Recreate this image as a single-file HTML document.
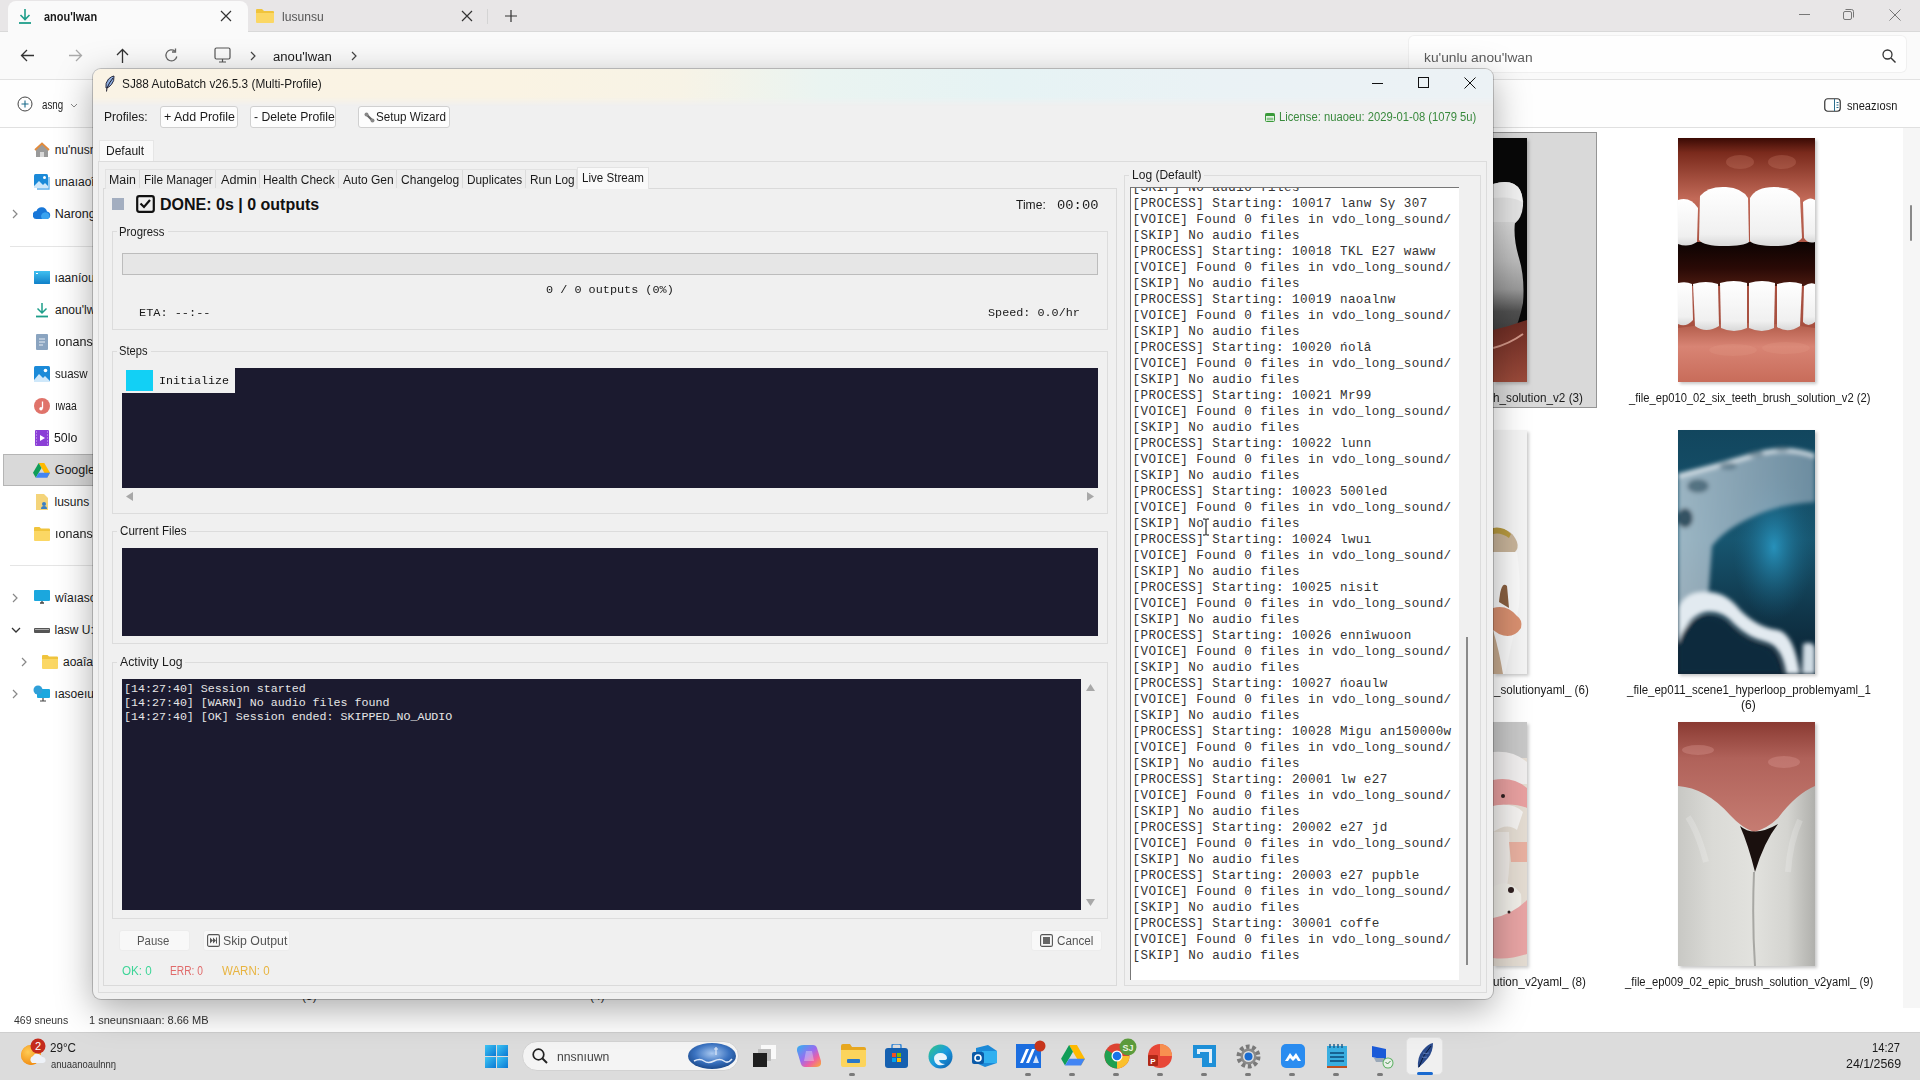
<!DOCTYPE html>
<html><head><meta charset="utf-8">
<style>
*{margin:0;padding:0;box-sizing:border-box}
html,body{width:1920px;height:1080px;overflow:hidden;background:#fff;font-family:"Liberation Sans",sans-serif;color:#1a1a1a}
.a{position:absolute}
.t{position:absolute;white-space:nowrap;line-height:1}
.m{font-family:"Liberation Mono",monospace}
.c{font-family:"Liberation Mono",monospace}
/* explorer */
#tabbar{left:0;top:0;width:1920px;height:32px;background:#e8e6e7;border-bottom:1px solid #d9d9d9}
#tab1{left:8px;top:1px;width:240px;height:32px;background:#fafafa;border-radius:8px 8px 0 0}
#navrow{left:0;top:32px;width:1920px;height:48px;background:#fafafa;border-bottom:1px solid #e2e2e2}
#toolrow{left:0;top:80px;width:1920px;height:48px;background:#fefefe;border-bottom:1px solid #e0e0e0}
#search{left:1409px;top:36px;width:497px;height:36px;background:#fefefe;border-radius:5px;box-shadow:0 0 0 1px #f0f0f0}
#nav{left:0;top:128px;width:93px;height:880px;background:#fff}
#content{left:93px;top:128px;width:1827px;height:880px;background:#fff}
#status{left:0;top:1008px;width:1920px;height:24px;background:#fff}
#taskbar{left:0;top:1032px;width:1920px;height:48px;background:#dcdcdc;border-top:1px solid #cfcfcf}
/* app */
#app{left:93px;top:69px;width:1400px;height:930px;background:#f0f0f0;border-radius:8px;box-shadow:0 0 0 1px rgba(0,0,0,.2),0 10px 36px rgba(0,0,0,.34)}
#title{left:93px;top:69px;width:1400px;height:37px;border-radius:8px 8px 0 0;background:linear-gradient(90deg,#faf3e5 0%,#faf3e3 30%,#f7f3e6 42%,#eaf4f1 52%,#e6f3f4 65%,#eaf2f5 80%,#ecf2f5 100%);-webkit-mask-image:linear-gradient(to bottom,#000 0%,#000 75%,transparent 100%);mask-image:linear-gradient(to bottom,#000 0%,#000 75%,transparent 100%)}
.dark{background:#1b1a2f}
.btn{position:absolute;background:#fdfdfd;border:1px solid #d0d0d0;border-radius:3px;font-size:12px;line-height:19px;text-align:center;color:#1a1a1a;white-space:nowrap}
.lf{position:absolute;border:1px solid #dcdcdc}
.lbl{position:absolute;font-size:12px;line-height:14px;background:#f0f0f0;padding:0 2px;white-space:nowrap;color:#1a1a1a}
.log{font-family:"Liberation Mono",monospace;font-size:12.6px;letter-spacing:0.42px;line-height:16px;color:#333;white-space:pre}
</style></head><body>

<!-- EXPLORER -->
<div id="tabbar" class="a"></div>
<div id="tab1" class="a"></div>
<!-- tab1 content -->
<svg class="a" style="left:17px;top:8px" width="16" height="17" viewBox="0 0 16 17"><path d="M8 1v10M3.5 7l4.5 4.5L12.5 7" fill="none" stroke="#1e9e8a" stroke-width="1.6"/><path d="M2 15h12" stroke="#1e9e8a" stroke-width="1.8"/></svg>
<div class="t" id="x0" style="left:43.52px;top:11.00px;font-size:12px;font-weight:bold;color:#1a1a1a;transform:scaleX(0.9123);transform-origin:0 0">anou'lwan</div>
<svg class="a" style="left:220px;top:10px" width="12" height="12" viewBox="0 0 12 12"><path d="M1 1l10 10M11 1L1 11" stroke="#333" stroke-width="1.2"/></svg>
<!-- tab2 -->
<svg class="a" style="left:256px;top:8px" width="18" height="15" viewBox="0 0 18 15"><path d="M0 2a1 1 0 0 1 1-1h5l2 2h9a1 1 0 0 1 1 1v10H0z" fill="#f0c43c"/><path d="M0 5h18v9a1 1 0 0 1-1 1H1a1 1 0 0 1-1-1z" fill="#fbd764"/></svg>
<div class="t" id="x1" style="left:282.47px;top:10.50px;font-size:12px;color:#555;transform:scaleX(1.0075);transform-origin:0 0">lusunsu</div>
<svg class="a" style="left:461px;top:10px" width="12" height="12" viewBox="0 0 12 12"><path d="M1 1l10 10M11 1L1 11" stroke="#333" stroke-width="1.2"/></svg>
<div class="a" style="left:487px;top:9px;width:1px;height:15px;background:#d4d4d4"></div>
<svg class="a" style="left:505px;top:10px" width="12" height="12" viewBox="0 0 12 12"><path d="M6 0v12M0 6h12" stroke="#333" stroke-width="1.2"/></svg>
<!-- window controls -->
<div class="a" style="left:1799px;top:14px;width:11px;height:1px;background:#777"></div>
<svg class="a" style="left:1843px;top:9px" width="11" height="11" viewBox="0 0 11 11"><rect x="0.5" y="2.5" width="8" height="8" rx="1.5" fill="none" stroke="#777"/><path d="M2.5 .5h6a2 2 0 0 1 2 2v6" fill="none" stroke="#777"/></svg>
<svg class="a" style="left:1889px;top:9px" width="12" height="12" viewBox="0 0 12 12"><path d="M.5 .5l11 11M11.5 .5l-11 11" stroke="#777" stroke-width="1"/></svg>

<div id="navrow" class="a"></div>
<svg class="a" style="left:20px;top:49px" width="15" height="13" viewBox="0 0 15 13"><path d="M14 6.5H1.5M7 1L1.5 6.5 7 12" fill="none" stroke="#333" stroke-width="1.3"/></svg>
<svg class="a" style="left:68px;top:49px" width="15" height="13" viewBox="0 0 15 13"><path d="M1 6.5h12.5M8 1l5.5 5.5L8 12" fill="none" stroke="#aaa" stroke-width="1.3"/></svg>
<svg class="a" style="left:116px;top:48px" width="13" height="15" viewBox="0 0 13 15"><path d="M6.5 15V1.5M1 7l5.5-5.5L12 7" fill="none" stroke="#333" stroke-width="1.3"/></svg>
<svg class="a" style="left:164px;top:48px" width="15" height="15" viewBox="0 0 15 15"><path d="M12.8 8.5A5.5 5.5 0 1 1 11 3.2" fill="none" stroke="#666" stroke-width="1.3"/><path d="M11.5 .5v3.5H8" fill="none" stroke="#666" stroke-width="1.3"/></svg>
<svg class="a" style="left:214px;top:47px" width="17" height="16" viewBox="0 0 17 16"><rect x="1" y="1" width="15" height="11" rx="1.5" fill="none" stroke="#555" stroke-width="1.2"/><path d="M5 15h7M8.5 12v3" stroke="#555" stroke-width="1.2"/></svg>
<svg class="a" style="left:250px;top:51px" width="7" height="10" viewBox="0 0 7 10"><path d="M1 1l4 4-4 4" fill="none" stroke="#444" stroke-width="1.2"/></svg>
<div class="t" id="x2" style="left:273.37px;top:51.00px;font-size:12.5px;color:#1a1a1a;transform:scaleX(1.0509);transform-origin:0 0">anou'lwan</div>
<svg class="a" style="left:351px;top:51px" width="7" height="10" viewBox="0 0 7 10"><path d="M1 1l4 4-4 4" fill="none" stroke="#444" stroke-width="1.2"/></svg>
<div id="search" class="a"></div>
<div class="t" id="x3" style="left:1423.67px;top:51.50px;font-size:12.5px;color:#5c5c5c;transform:scaleX(1.1021);transform-origin:0 0">ku'unlu anou'lwan</div>
<svg class="a" style="left:1882px;top:49px" width="14" height="14" viewBox="0 0 14 14"><circle cx="5.5" cy="5.5" r="4.5" fill="none" stroke="#333" stroke-width="1.3"/><path d="M9 9l4.5 4.5" stroke="#333" stroke-width="1.4"/></svg>

<div id="toolrow" class="a"></div>
<svg class="a" style="left:17px;top:96px" width="16" height="16" viewBox="0 0 16 16"><circle cx="8" cy="8" r="7" fill="none" stroke="#444" stroke-width="1"/><path d="M8 4.5v7M4.5 8h7" stroke="#1a6a8a" stroke-width="1.1"/></svg>
<div class="t" id="x4" style="left:41.97px;top:99.00px;font-size:12px;color:#1a1a1a;transform:scaleX(0.8115);transform-origin:0 0">asng</div>
<svg class="a" style="left:70px;top:103px" width="8" height="5" viewBox="0 0 8 5"><path d="M1 1l3 3 3-3" fill="none" stroke="#888" stroke-width="1"/></svg>
<svg class="a" style="left:1824px;top:98px" width="17" height="14" viewBox="0 0 17 14"><rect x=".75" y=".75" width="15.5" height="12.5" rx="3" fill="none" stroke="#333" stroke-width="1.2"/><path d="M10.5 1v12M12.5 4.5h2M12.5 7h2M12.5 9.5h2" stroke="#2a6c8c" stroke-width="1"/></svg>
<div class="t" id="x5" style="left:1847.49px;top:99.50px;font-size:12px;color:#1a1a1a;transform:scaleX(0.9204);transform-origin:0 0">sneazıosn</div>

<div id="nav" class="a"></div>

<!-- nav items -->
<svg class="a" style="left:34px;top:142px" width="16" height="16" viewBox="0 0 16 16"><path d="M2 7.5L8 2l6 5.5V15H2z" fill="#9a9a9a"/><path d="M1 8l7-6.5L15 8" fill="none" stroke="#e08a3c" stroke-width="1.8"/><rect x="6" y="10" width="4" height="5" fill="#d8d8d8"/></svg>
<div class="t" id="x6" style="left:54.74px;top:144.00px;font-size:12px;color:#1a1a1a;transform:scaleX(1.0000);transform-origin:0 0">nu'nusn</div>
<svg class="a" style="left:34px;top:174px" width="16" height="16" viewBox="0 0 16 16"><rect x="0" y="0" width="14" height="14" rx="1.5" fill="#1b8ad8"/><path d="M0 12l5-5 4 4 2-2 3 3v2H0z" fill="#cfe8fa"/><circle cx="10.5" cy="3.5" r="1.5" fill="#fff"/><path d="M15 3v12H3" fill="none" stroke="#5fb0ea" stroke-width="1.3"/></svg>
<div class="t" id="x7" style="left:54.66px;top:176.00px;font-size:12px;color:#1a1a1a;transform:scaleX(1.0000);transform-origin:0 0">unaıaoî</div>
<svg class="a" style="left:12px;top:209px" width="7" height="10" viewBox="0 0 7 10"><path d="M1 1l4 4-4 4" fill="none" stroke="#888" stroke-width="1.2"/></svg>
<svg class="a" style="left:33px;top:207px" width="18" height="12" viewBox="0 0 18 12"><path d="M4 12a4 4 0 0 1-.5-8A5.5 5.5 0 0 1 14 4.5 3.8 3.8 0 0 1 14 12z" fill="#1877d8"/><path d="M9 12a4 4 0 0 1 2-6.5 4 4 0 0 1 5.5 3A3 3 0 0 1 14 12z" fill="#3aa3f0"/></svg>
<div class="t" id="x8" style="left:54.68px;top:208.00px;font-size:12.5px;color:#1a1a1a;transform:scaleX(1.0000);transform-origin:0 0">Narong</div>
<div class="a" style="left:10px;top:246px;width:83px;height:1px;background:#e5e5e5"></div>
<svg class="a" style="left:34px;top:271px" width="16" height="14" viewBox="0 0 16 14"><rect x="0" y="0" width="16" height="13" rx="1" fill="#1da1e0"/><rect x="0" y="0" width="16" height="13" rx="1" fill="url(#gdesk)"/><defs><linearGradient id="gdesk" x1="0" y1="0" x2="0" y2="1"><stop offset="0" stop-color="#40c0f0"/><stop offset="1" stop-color="#1080c8"/></linearGradient></defs><rect x="2" y="2" width="2" height="1" fill="#fff"/></svg>
<div class="t" id="x9" style="left:54.60px;top:272.00px;font-size:12px;color:#1a1a1a;transform:scaleX(1.0000);transform-origin:0 0">ıaaníou</div>
<svg class="a" style="left:35px;top:302px" width="14" height="16" viewBox="0 0 14 16"><path d="M7 1v10M2.5 6.5L7 11l4.5-4.5" fill="none" stroke="#1e9e8a" stroke-width="1.5"/><path d="M1 14.5h12" stroke="#1e9e8a" stroke-width="1.8"/></svg>
<div class="t" id="x10" style="left:55.01px;top:304.00px;font-size:12px;color:#1a1a1a;transform:scaleX(1.0000);transform-origin:0 0">anou'lwa</div>
<svg class="a" style="left:36px;top:334px" width="12" height="16" viewBox="0 0 12 16"><rect x="0" y="0" width="12" height="16" rx="1" fill="#8aa4c0"/><path d="M3 5h6M3 8h6M3 11h4" stroke="#e8eef5" stroke-width="1"/></svg>
<div class="t" id="x11" style="left:54.84px;top:336.00px;font-size:12px;color:#1a1a1a;transform:scaleX(1.0457);transform-origin:0 0">ıonans</div>
<svg class="a" style="left:34px;top:366px" width="16" height="16" viewBox="0 0 16 16"><rect x="0" y="0" width="16" height="16" rx="1.5" fill="#1b8ad8"/><path d="M0 14l5-6 4 4 2-2 5 5v1H0z" fill="#cfe8fa"/><circle cx="11.5" cy="4.5" r="1.8" fill="#fff"/></svg>
<div class="t" id="x12" style="left:55.03px;top:368.00px;font-size:12px;color:#1a1a1a;transform:scaleX(0.9588);transform-origin:0 0">suasw</div>
<svg class="a" style="left:34px;top:398px" width="16" height="16" viewBox="0 0 16 16"><circle cx="8" cy="8" r="8" fill="#e0736a"/><path d="M8.5 3.5v7" stroke="#fff" stroke-width="1.3"/><circle cx="7" cy="10.8" r="1.7" fill="#fff"/></svg>
<div class="t" id="x13" style="left:54.50px;top:400.00px;font-size:12px;color:#1a1a1a;transform:scaleX(0.8583);transform-origin:0 0">ıwaa</div>
<svg class="a" style="left:35px;top:430px" width="14" height="16" viewBox="0 0 14 16"><rect x="0" y="0" width="14" height="16" rx="1" fill="#8b3fd6"/><path d="M5 5l5 3-5 3z" fill="#fff"/><path d="M1 2h1M1 5h1M1 8h1M1 11h1M1 14h1M12 2h1M12 5h1M12 8h1M12 11h1M12 14h1" stroke="#d8c0f4" stroke-width="1"/></svg>
<div class="t" id="x14" style="left:53.93px;top:432.00px;font-size:12px;color:#1a1a1a;transform:scaleX(1.0286);transform-origin:0 0">50lo</div>
<div class="a" style="left:3px;top:454px;width:92px;height:32px;background:#d9d9d9;border:1px solid #b5b5b5;border-right:none"></div>
<svg class="a" style="left:33px;top:463px" width="17" height="15" viewBox="0 0 17 15"><path d="M5.7 0h5.6l5.7 9.8-2.8 4.9z" fill="#ffba00"/><path d="M5.7 0L0 9.8l2.8 4.9L8.5 4.9z" fill="#0f9d58"/><path d="M2.8 14.7h11.4L17 9.8H5.7z" fill="#4285f4"/><path d="M11.3 0H5.7l2.8 4.9z" fill="#e94235" opacity=".0"/></svg>
<div class="t" id="x15" style="left:54.68px;top:464.00px;font-size:12.5px;color:#1a1a1a;transform:scaleX(1.0000);transform-origin:0 0">Google</div>
<svg class="a" style="left:36px;top:494px" width="14" height="16" viewBox="0 0 14 16"><path d="M0 0h8l4 4v12H0z" fill="#f4d47a"/><circle cx="8" cy="10" r="2" fill="#3b7fc4"/><path d="M5 15a3 3 0 0 1 6 0z" fill="#3b7fc4"/></svg>
<div class="t" id="x16" style="left:54.47px;top:496.00px;font-size:12px;color:#1a1a1a;transform:scaleX(1.0000);transform-origin:0 0">lusuns</div>
<svg class="a" style="left:34px;top:527px" width="16" height="14" viewBox="0 0 16 14"><path d="M0 1a1 1 0 0 1 1-1h4.5l1.5 1.5h8a1 1 0 0 1 1 1V13H0z" fill="#f0c43c"/><path d="M0 4h16v9a1 1 0 0 1-1 1H1a1 1 0 0 1-1-1z" fill="#fbd764"/></svg>
<div class="t" id="x17" style="left:54.84px;top:528.00px;font-size:12px;color:#1a1a1a;transform:scaleX(1.0457);transform-origin:0 0">ıonans</div>
<div class="a" style="left:10px;top:565px;width:83px;height:1px;background:#e5e5e5"></div>
<svg class="a" style="left:12px;top:593px" width="7" height="10" viewBox="0 0 7 10"><path d="M1 1l4 4-4 4" fill="none" stroke="#888" stroke-width="1.2"/></svg>
<svg class="a" style="left:34px;top:590px" width="16" height="16" viewBox="0 0 16 16"><rect x="0" y="0" width="16" height="11" rx="1" fill="#1ba7de"/><path d="M6 13h4M8 11v2" stroke="#444" stroke-width="1.3"/></svg>
<div class="t" id="x18" style="left:54.98px;top:592.00px;font-size:12px;color:#1a1a1a;transform:scaleX(1.0000);transform-origin:0 0">wîaıaso</div>
<svg class="a" style="left:11px;top:627px" width="10" height="7" viewBox="0 0 10 7"><path d="M1 1l4 4 4-4" fill="none" stroke="#333" stroke-width="1.3"/></svg>
<svg class="a" style="left:34px;top:626px" width="16" height="8" viewBox="0 0 16 8"><rect x="0" y="2" width="16" height="5" rx="1" fill="#555"/><rect x="1" y="3" width="14" height="1" fill="#aaa"/></svg>
<div class="t" id="x19" style="left:54.51px;top:624.00px;font-size:12px;color:#1a1a1a;transform:scaleX(1.0000);transform-origin:0 0">lasw U:</div>
<svg class="a" style="left:21px;top:657px" width="7" height="10" viewBox="0 0 7 10"><path d="M1 1l4 4-4 4" fill="none" stroke="#888" stroke-width="1.2"/></svg>
<svg class="a" style="left:42px;top:655px" width="16" height="14" viewBox="0 0 16 14"><path d="M0 1a1 1 0 0 1 1-1h4.5l1.5 1.5h8a1 1 0 0 1 1 1V13H0z" fill="#f0c43c"/><path d="M0 4h16v9a1 1 0 0 1-1 1H1a1 1 0 0 1-1-1z" fill="#fbd764"/></svg>
<div class="t" id="x20" style="left:62.96px;top:656.00px;font-size:12px;color:#1a1a1a;transform:scaleX(1.0000);transform-origin:0 0">aoaîa</div>
<svg class="a" style="left:12px;top:689px" width="7" height="10" viewBox="0 0 7 10"><path d="M1 1l4 4-4 4" fill="none" stroke="#888" stroke-width="1.2"/></svg>
<svg class="a" style="left:33px;top:685px" width="18" height="18" viewBox="0 0 18 18"><rect x="4" y="4" width="13" height="9" rx="1" fill="#1ba7de"/><circle cx="5" cy="5" r="4.5" fill="#2f9fd8"/><path d="M10 13v3M7 16h6" stroke="#444" stroke-width="1.2"/></svg>
<div class="t" id="x21" style="left:54.58px;top:688.00px;font-size:12px;color:#1a1a1a;transform:scaleX(1.0000);transform-origin:0 0">ıasoeıu</div>

<div id="content" class="a"></div>
<div class="a" style="left:1903px;top:128px;width:17px;height:880px;background:#f6f6f6"></div>
<div class="a" style="left:1910px;top:205px;width:2px;height:36px;background:#8a8a8a;border-radius:1px"></div>
<!-- selected item bg -->
<div class="a" style="left:1380px;top:132px;width:217px;height:276px;background:#d9d9d9;border:1px solid #959595"></div>
<!-- row1 left thumb -->
<svg class="a" style="left:1493px;top:138px;box-shadow:2px 2px 3px rgba(0,0,0,.2)" width="34" height="244" viewBox="0 0 34 244">
<defs><linearGradient id="g1n" x1="0" y1="0" x2="0" y2="1"><stop offset="0" stop-color="#d8d8d8"/><stop offset=".35" stop-color="#bcbcbc"/><stop offset=".6" stop-color="#9a9a9a"/><stop offset=".8" stop-color="#505050"/><stop offset="1" stop-color="#404040"/></linearGradient>
<linearGradient id="g1r" x1="0" y1="0" x2="0" y2="1"><stop offset="0" stop-color="#6a2a22"/><stop offset="1" stop-color="#9a4a3a"/></linearGradient></defs>
<rect width="34" height="244" fill="#080808"/>
<path d="M0 84L0 46Q20 40 27 52Q32 62 29 74Q26 84 20 86z" fill="#e4e4e4"/>
<path d="M0 46Q20 40 27 52Q30 58 29 64Q20 58 0 60z" fill="#f2f2f2"/>
<path d="M0 84L22 84Q20 100 26 120Q32 140 30 165Q26 185 20 195L0 196z" fill="url(#g1n)"/>
<path d="M0 192Q18 188 34 182V244H0z" fill="url(#g1r)"/>
<path d="M0 210Q16 206 30 196" stroke="#e8b0a0" stroke-width="2" fill="none" opacity=".8"/>
</svg>
<div class="t" id="x22" style="left:1492.82px;top:391.50px;font-size:12px;color:#1a1a1a;transform:scaleX(0.9772);transform-origin:0 0">h_solution_v2 (3)</div>
<!-- row1 right thumb: teeth -->
<svg class="a" style="left:1678px;top:138px;box-shadow:2px 2px 3px rgba(0,0,0,.22)" width="137" height="244" viewBox="0 0 137 244">
<defs>
<linearGradient id="t1g" x1="0" y1="0" x2="0" y2="1"><stop offset="0" stop-color="#3a0a04"/><stop offset=".06" stop-color="#7a2a1c"/><stop offset=".25" stop-color="#c26a58"/><stop offset=".45" stop-color="#a85040"/></linearGradient>
<linearGradient id="t1l" x1="0" y1="0" x2="0" y2="1"><stop offset="0" stop-color="#b05a48"/><stop offset=".4" stop-color="#d88474"/><stop offset="1" stop-color="#c86c5a"/></linearGradient>
<linearGradient id="t1t" x1="0" y1="0" x2="0" y2="1"><stop offset="0" stop-color="#ffffff"/><stop offset=".8" stop-color="#f0f0f0"/><stop offset="1" stop-color="#d8d8d8"/></linearGradient>
<linearGradient id="t1m" x1="0" y1="0" x2="0" y2="1"><stop offset="0" stop-color="#0c0302"/><stop offset=".6" stop-color="#2a0a06"/><stop offset="1" stop-color="#4a1a10"/></linearGradient>
</defs>
<rect width="137" height="244" fill="url(#t1g)"/>
<rect y="104" width="137" height="44" fill="url(#t1m)"/>
<path d="M0 62Q12 58 20 70L19 104Q10 110 0 106z" fill="url(#t1t)"/>
<path d="M22 58Q30 48 48 49Q64 50 70 60L71 104Q66 108 46 108Q26 108 21 102z" fill="url(#t1t)"/>
<path d="M72 60Q78 49 96 49Q114 49 122 60L124 100Q118 108 98 108Q76 108 72 103z" fill="url(#t1t)"/>
<path d="M125 64Q132 58 137 62V104Q130 106 126 100z" fill="url(#t1t)"/>
<path d="M0 190Q70 180 137 190V244H0z" fill="url(#t1l)"/>
<path d="M0 145Q8 143 14 146L15 182Q8 190 0 186z" fill="url(#t1t)"/>
<path d="M15 146Q28 142 40 146L41 188Q28 196 17 188z" fill="url(#t1t)"/>
<path d="M42 145Q56 141 69 145L69 190Q56 196 43 190z" fill="url(#t1t)"/>
<path d="M71 145Q84 141 97 145L96 190Q84 196 71 190z" fill="url(#t1t)"/>
<path d="M99 146Q112 142 124 146L122 188Q110 196 99 189z" fill="url(#t1t)"/>
<path d="M126 148Q132 144 137 146V184Q130 190 125 184z" fill="url(#t1t)"/>
<ellipse cx="62" cy="24" rx="14" ry="7" fill="#d88a78" opacity=".25"/><ellipse cx="104" cy="24" rx="14" ry="7" fill="#d88a78" opacity=".25"/>
<ellipse cx="55" cy="212" rx="24" ry="6" fill="#e49a88" opacity=".25"/><ellipse cx="108" cy="210" rx="24" ry="6" fill="#e49a88" opacity=".25"/>
</svg>
<div class="t" id="x23" style="left:1629.00px;top:391.50px;font-size:12px;color:#1a1a1a;transform:scaleX(0.9326);transform-origin:0 0">_file_ep010_02_six_teeth_brush_solution_v2 (2)</div>
<!-- row2 left -->
<svg class="a" style="left:1493px;top:430px;box-shadow:2px 2px 3px rgba(0,0,0,.2)" width="34" height="244" viewBox="0 0 34 244">
<rect width="34" height="244" fill="#f4f4f4"/>
<path d="M0 100Q18 96 24 112Q26 118 22 122H0z" fill="#c8b49a"/>
<path d="M0 98Q10 96 18 104L16 108Q8 102 0 104z" fill="#b89a40"/>
<path d="M0 122H24Q28 150 26 175Q22 200 12 244H0z" fill="#fafafa"/>
<path d="M6 172Q8 150 14 156L16 178z" fill="#8a6040"/>
<path d="M0 178Q14 174 24 186Q30 190 28 198Q20 210 6 204L0 200z" fill="#d99070"/>
<path d="M0 200Q6 220 10 244H0z" fill="#c8ac90"/>
</svg>
<div class="t" id="x24" style="left:1493.77px;top:684.25px;font-size:12px;color:#1a1a1a;transform:scaleX(0.9665);transform-origin:0 0">_solutionyaml_ (6)</div>
<!-- row2 right: blue -->
<svg class="a" style="left:1678px;top:430px;box-shadow:2px 2px 3px rgba(0,0,0,.22)" width="137" height="244" viewBox="0 0 137 244">
<defs>
<linearGradient id="b2g" x1="0" y1="0" x2="0" y2="1"><stop offset="0" stop-color="#12465e"/><stop offset=".45" stop-color="#175670"/><stop offset=".75" stop-color="#10364a"/><stop offset="1" stop-color="#0a2030"/></linearGradient>
<radialGradient id="b2c" cx=".7" cy=".48" r=".3"><stop offset="0" stop-color="#2a9cc8" stop-opacity=".85"/><stop offset="1" stop-color="#1a6080" stop-opacity="0"/></radialGradient>
<linearGradient id="b2w" x1="0" y1="0" x2="1" y2="0"><stop offset="0" stop-color="#c8d6e0"/><stop offset="1" stop-color="#8aa2b4"/></linearGradient>
<filter id="bl2"><feGaussianBlur stdDeviation="2"/></filter>
</defs>
<rect width="137" height="244" fill="url(#b2g)"/>
<rect width="137" height="244" fill="url(#b2c)"/>
<g filter="url(#bl2)">
<path d="M0 44Q40 34 80 22Q110 14 137 24V72Q100 74 72 88Q46 100 34 116L30 170Q15 176 0 178z" fill="url(#b2w)" opacity=".75"/>
<path d="M0 46Q40 36 80 24Q110 16 137 26" stroke="#e8eef2" stroke-width="5" fill="none" opacity=".7"/>
<ellipse cx="20" cy="56" rx="11" ry="7" fill="#2a4a5c" opacity=".6"/><ellipse cx="50" cy="36" rx="9" ry="4" fill="#3a5a6c" opacity=".5"/><ellipse cx="78" cy="24" rx="8" ry="3.5" fill="#3a5a6c" opacity=".5"/><ellipse cx="104" cy="19" rx="7" ry="3" fill="#3a5a6c" opacity=".5"/>
<ellipse cx="7" cy="88" rx="8" ry="10" fill="#1a3a4c" opacity=".8"/>
<path d="M0 178Q8 160 30 162Q48 162 62 180Q80 198 100 200Q116 204 122 244H108Q104 216 88 212Q70 208 56 194Q44 180 28 182Q10 186 4 208L0 214z" fill="#e2eaf0"/>
<path d="M0 214Q8 188 28 186Q44 186 56 200Q68 212 86 216Q100 222 104 244H0z" fill="#0c2a3c"/>
<path d="M125 214Q137 210 137 220V244H124z" fill="#d0dce4"/>
</g>
</svg>
<div class="t" id="x25" style="left:1627.00px;top:684.25px;font-size:12px;color:#1a1a1a;transform:scaleX(0.9575);transform-origin:0 0">_file_ep011_scene1_hyperloop_problemyaml_1</div>
<div class="t" id="x26" style="left:1741.47px;top:699.00px;font-size:12px;color:#1a1a1a;transform:scaleX(1.0077);transform-origin:0 0">(6)</div>
<!-- row3 left -->
<svg class="a" style="left:1493px;top:722px;box-shadow:2px 2px 3px rgba(0,0,0,.2)" width="34" height="244" viewBox="0 0 34 244">
<rect width="34" height="244" fill="#e4dcd2"/>
<rect width="34" height="36" fill="#c8c8c8"/>
<path d="M0 30Q20 28 34 40V62H0z" fill="#f0eeee"/>
<path d="M0 58Q20 54 34 66V86Q20 80 0 84z" fill="#e8a0a0"/>
<path d="M0 84Q20 80 30 90L24 108Q14 100 0 110z" fill="#f4f2f0"/>
<path d="M0 110H16Q18 140 14 165H0z" fill="#eeeae6"/>
<path d="M16 120H34V140H18z" fill="#e8b0a0"/>
<path d="M0 165Q16 155 28 172Q30 190 20 200Q10 196 0 200z" fill="#f0eee8"/>
<path d="M0 196Q20 192 34 178V232Q16 238 0 236z" fill="#e8a4a4"/>
<circle cx="10" cy="74" r="2" fill="#302020"/><circle cx="18" cy="168" r="3" fill="#302020"/><circle cx="16" cy="190" r="1.5" fill="#302020"/>
</svg>
<div class="t" id="x27" style="left:1492.83px;top:976.25px;font-size:12px;color:#1a1a1a;transform:scaleX(0.9750);transform-origin:0 0">ution_v2yaml_ (8)</div>
<!-- row3 right: V gums -->
<svg class="a" style="left:1678px;top:722px;box-shadow:2px 2px 3px rgba(0,0,0,.22)" width="137" height="244" viewBox="0 0 137 244">
<defs>
<linearGradient id="v3g" x1="0" y1="0" x2="0" y2="1"><stop offset="0" stop-color="#8a3a32"/><stop offset=".15" stop-color="#b0625a"/><stop offset=".45" stop-color="#c67c72"/></linearGradient>
<linearGradient id="v3t" x1="0" y1="0" x2="1" y2="0"><stop offset="0" stop-color="#c8c8c4"/><stop offset=".25" stop-color="#dadad6"/><stop offset=".55" stop-color="#e2e2de"/><stop offset=".8" stop-color="#d4d4d0"/><stop offset="1" stop-color="#b0b0ac"/></linearGradient>
</defs>
<rect width="137" height="244" fill="url(#v3g)"/>
<path d="M0 64Q28 66 52 93Q64 106 76 110Q90 106 100 96Q118 72 137 64V244H0z" fill="url(#v3t)"/>
<path d="M62 104Q76 116 100 102Q86 120 77 150Q70 122 62 104z" fill="#1a100e"/>
<path d="M76 150Q74 200 77 244" stroke="#a8a8a4" stroke-width="2" fill="none"/>
<ellipse cx="20" cy="28" rx="16" ry="5" fill="#dc9c94" opacity=".35"/><ellipse cx="106" cy="40" rx="16" ry="6" fill="#dc9c94" opacity=".35"/>
<path d="M10 95Q20 110 28 140" stroke="#ffffff" stroke-width="6" opacity=".2" fill="none"/>
<path d="M122 98Q112 120 110 150" stroke="#ffffff" stroke-width="6" opacity=".2" fill="none"/>
</svg>
<div class="t" id="x28" style="left:1625.00px;top:976.25px;font-size:12px;color:#1a1a1a;transform:scaleX(0.9370);transform-origin:0 0">_file_ep009_02_epic_brush_solution_v2yaml_ (9)</div>
<!-- status right icons -->
<svg class="a" style="left:1873px;top:1013px" width="14" height="12" viewBox="0 0 14 12"><path d="M0 1h14M0 4.5h14M0 8h14M0 11.5h14" stroke="#555" stroke-width="1"/></svg>
<svg class="a" style="left:1896px;top:1012px" width="14" height="13" viewBox="0 0 14 13"><rect x=".5" y=".5" width="13" height="12" fill="none" stroke="#555" stroke-width="1"/></svg>

<div id="status" class="a"></div>
<div class="t" id="x29" style="left:13.79px;top:1014.75px;font-size:11.5px;color:#333;transform:scaleX(0.9110);transform-origin:0 0">469 sneuns</div>

<div class="t" id="x30" style="left:88.62px;top:1014.75px;font-size:11.5px;color:#333;transform:scaleX(0.9593);transform-origin:0 0">1 sneunsnıaan: 8.66 MB</div>
<div id="taskbar" class="a"></div>
<!-- weather -->
<svg class="a" style="left:18px;top:1036px" width="30" height="32" viewBox="0 0 30 32"><circle cx="13" cy="19" r="10" fill="#f59a23"/><circle cx="13" cy="19" r="10" fill="url(#sun)"/><defs><radialGradient id="sun" cx=".35" cy=".35" r=".7"><stop offset="0" stop-color="#ffcc55"/><stop offset="1" stop-color="#f08a10"/></radialGradient></defs><path d="M14 27a4 4 0 0 1 1-7 5 5 0 0 1 9 1 3 3 0 0 1 1 6z" fill="#eef2f8"/><circle cx="20" cy="10" r="7.5" fill="#c42b1c"/><text x="20" y="14" font-family="Liberation Sans" font-size="11" fill="#fff" text-anchor="middle">2</text></svg>
<div class="t" id="x31" style="left:49.83px;top:1041.75px;font-size:12px;color:#1a1a1a;transform:scaleX(0.9700);transform-origin:0 0">29°C</div>
<div class="t" id="x32" style="left:50.82px;top:1058.50px;font-size:11.5px;color:#333;transform:scaleX(0.8196);transform-origin:0 0">anuaanoaulnnŋ</div>
<!-- start -->
<svg class="a" style="left:485px;top:1045px" width="23" height="23" viewBox="0 0 23 23"><defs><linearGradient id="win" x1="0" y1="0" x2="1" y2="1"><stop offset="0" stop-color="#3ec6f5"/><stop offset="1" stop-color="#0a78d4"/></linearGradient></defs><rect x="0" y="0" width="11" height="11" fill="url(#win)"/><rect x="12" y="0" width="11" height="11" fill="url(#win)"/><rect x="0" y="12" width="11" height="11" fill="url(#win)"/><rect x="12" y="12" width="11" height="11" fill="url(#win)"/></svg>
<!-- search pill -->
<div class="a" style="left:522px;top:1041px;width:217px;height:30px;background:#f4f4f4;border:1px solid #d2d2d2;border-radius:15px"></div>
<svg class="a" style="left:532px;top:1048px" width="16" height="16" viewBox="0 0 16 16"><circle cx="6.5" cy="6.5" r="5.3" fill="none" stroke="#222" stroke-width="1.7"/><path d="M10.5 10.5l4.5 4.5" stroke="#222" stroke-width="1.9"/></svg>
<div class="t" id="x33" style="left:556.94px;top:1050.50px;font-size:12px;color:#444;transform:scaleX(1.0200);transform-origin:0 0">nnsnıuwn</div>
<svg class="a" style="left:688px;top:1043px" width="48" height="26" viewBox="0 0 48 26"><defs><radialGradient id="pill" cx=".5" cy=".4" r=".6"><stop offset="0" stop-color="#a8c8f0"/><stop offset=".6" stop-color="#3a72c0"/><stop offset="1" stop-color="#1c4a8c"/></radialGradient></defs><ellipse cx="24" cy="13" rx="24" ry="13" fill="url(#pill)"/><path d="M6 18q6-3 10 0t10 0 10 0 8-2" stroke="#dfe9f8" stroke-width="1.5" fill="none"/><path d="M28 4v8M26 6h4" stroke="#dfe9f8" stroke-width="1.2"/></svg>
<!-- task view -->
<svg class="a" style="left:753px;top:1045px" width="23" height="22" viewBox="0 0 23 22"><rect x="8" y="0" width="15" height="14" fill="#fafafa"/><rect x="5" y="4" width="13" height="12" fill="#bdbdbd"/><rect x="0" y="8" width="14" height="14" fill="#1f1f1f"/></svg>
<!-- copilot -->
<svg class="a" style="left:797px;top:1045px" width="24" height="22" viewBox="0 0 24 22"><defs><linearGradient id="cop" x1="0" y1="0" x2="1" y2="1"><stop offset="0" stop-color="#2fb4f0"/><stop offset=".45" stop-color="#9a6cf0"/><stop offset=".7" stop-color="#f060a0"/><stop offset="1" stop-color="#f8b030"/></linearGradient></defs><path d="M7 0h9q3 0 4 3l4 13q1 6-5 6H8q-3 0-4-3L0 6Q-1 0 7 0z" fill="url(#cop)"/><path d="M9 6h6l2 10H7z" fill="#f4f4f4" opacity=".35"/></svg>
<!-- explorer -->
<svg class="a" style="left:841px;top:1044px" width="25" height="23" viewBox="0 0 25 23"><path d="M0 2a2 2 0 0 1 2-2h7l2 3h12a2 2 0 0 1 2 2v16H0z" fill="#e8a820"/><path d="M0 6h25v15a2 2 0 0 1-2 2H2a2 2 0 0 1-2-2z" fill="#fcd45c"/><rect x="6" y="15" width="13" height="4" rx="1" fill="#2a78c8"/></svg>
<!-- store -->
<svg class="a" style="left:885px;top:1044px" width="23" height="24" viewBox="0 0 23 24"><path d="M7 4V2a2 2 0 0 1 2-2h5a2 2 0 0 1 2 2v2" fill="none" stroke="#3a8ad8" stroke-width="1.5"/><rect x="0" y="4" width="23" height="20" rx="3" fill="#1560b0"/><rect x="7" y="9" width="4" height="4" fill="#f25022"/><rect x="12" y="9" width="4" height="4" fill="#7fba00"/><rect x="7" y="14" width="4" height="4" fill="#00a4ef"/><rect x="12" y="14" width="4" height="4" fill="#ffb900"/></svg>
<!-- edge -->
<svg class="a" style="left:928px;top:1044px" width="25" height="25" viewBox="0 0 25 25"><defs><linearGradient id="edg" x1="0" y1="0" x2="1" y2="1"><stop offset="0" stop-color="#36c880"/><stop offset=".5" stop-color="#1a9ce0"/><stop offset="1" stop-color="#0c5aa8"/></linearGradient></defs><circle cx="12.5" cy="12.5" r="12" fill="url(#edg)"/><path d="M6 14a6.5 5 0 0 1 13 0q0 2-3 2h-5q1 4 6 4-3 2-7 1-4-2-4-7z" fill="#e8f4fc"/></svg>
<!-- outlook -->
<svg class="a" style="left:972px;top:1045px" width="25" height="22" viewBox="0 0 25 22"><path d="M4 3l12-3 9 6v12L13 22 4 18z" fill="#1c8ad8"/><path d="M10 6l15 0v12H10z" fill="#30b0f0"/><rect x="0" y="7" width="12" height="12" rx="2" fill="#0a5aa8"/><circle cx="6" cy="13" r="3" fill="none" stroke="#fff" stroke-width="1.6"/></svg>
<!-- M app -->
<svg class="a" style="left:1016px;top:1040px" width="33" height="28" viewBox="0 0 33 28"><rect x="0" y="4" width="25" height="24" fill="#1c6ee0"/><path d="M4 23l6-14h3l-6 14zM10 23l6-14h3l-6 14z" fill="#fff"/><path d="M17 23l3-8 3 8z" fill="#fff" opacity=".8"/><circle cx="24" cy="6" r="5.5" fill="#c8361c"/></svg>
<!-- drive -->
<svg class="a" style="left:1061px;top:1045px" width="24" height="21" viewBox="0 0 17 15"><path d="M5.7 0h5.6l5.7 9.8-2.8 4.9z" fill="#ffba00"/><path d="M5.7 0L0 9.8l2.8 4.9L8.5 4.9z" fill="#0f9d58"/><path d="M2.8 14.7h11.4L17 9.8H5.7z" fill="#4285f4"/></svg>
<!-- chrome -->
<svg class="a" style="left:1104px;top:1038px" width="34" height="31" viewBox="0 0 34 31"><circle cx="13" cy="18" r="12.5" fill="#dd4433"/><path d="M13 18L2.2 11.8A12.5 12.5 0 0 0 13 30.5z" fill="#1fa050"/><path d="M13 18h12.5A12.5 12.5 0 0 1 13 30.5z" fill="#fbc02d"/><circle cx="13" cy="18" r="5.5" fill="#fff"/><circle cx="13" cy="18" r="4.3" fill="#1a73e8"/><circle cx="24" cy="9" r="8.5" fill="#5c9c3c"/><text x="24" y="12.5" font-family="Liberation Sans" font-size="9" font-weight="bold" fill="#e8f4e0" text-anchor="middle">SJ</text></svg>
<!-- pdf -->
<svg class="a" style="left:1148px;top:1044px" width="24" height="24" viewBox="0 0 24 24"><circle cx="12" cy="12" r="12" fill="#e84838"/><path d="M12 0a12 12 0 0 1 12 12H12z" fill="#f89050"/><rect x="0" y="11" width="10" height="11" rx="1" fill="#b02818"/><text x="5" y="20" font-family="Liberation Sans" font-size="8" font-weight="bold" fill="#fff" text-anchor="middle">P</text></svg>
<!-- blue app -->
<svg class="a" style="left:1193px;top:1045px" width="23" height="22" viewBox="0 0 23 22"><path d="M0 0h23v22H9V13H0z" fill="#1e90d8"/><path d="M4 4h15v14h-6V9H4z" fill="#e0f0fa"/><path d="M7 7h9v11h-3V10H7z" fill="#1e90d8"/></svg>
<!-- settings -->
<svg class="a" style="left:1236px;top:1044px" width="25" height="25" viewBox="0 0 25 25"><circle cx="12.5" cy="12.5" r="9.5" fill="none" stroke="#7a7a7a" stroke-width="5" stroke-dasharray="3.5 2.5"/><circle cx="12.5" cy="12.5" r="8" fill="#8a8a8a"/><circle cx="12.5" cy="12.5" r="5.5" fill="#e0e0e0"/><circle cx="12.5" cy="12.5" r="4" fill="#1a6cd0"/></svg>
<!-- cloud app -->
<svg class="a" style="left:1281px;top:1044px" width="24" height="24" viewBox="0 0 24 24"><rect width="24" height="24" rx="5" fill="#2a8cf0"/><path d="M4 17l5-8 3 4 3-4 5 8h-3l-2-3-3 3-3-3-2 3z" fill="#fff"/></svg>
<!-- notepad -->
<svg class="a" style="left:1327px;top:1044px" width="20" height="25" viewBox="0 0 20 25"><rect x="0" y="2" width="20" height="21" fill="#3aaee0"/><rect x="0" y="22" width="20" height="2" fill="#c05020"/><path d="M3 0v4M7 0v4M11 0v4M15 0v4" stroke="#1a5a8a" stroke-width="1.4"/><path d="M3 9h14M3 13h14M3 17h14" stroke="#0c4a78" stroke-width="1.3"/></svg>
<!-- remote -->
<svg class="a" style="left:1370px;top:1044px" width="24" height="25" viewBox="0 0 24 25"><path d="M2 2l14 3v11L2 13z" fill="#1a5ad8"/><path d="M4 14h10l2 4H6z" fill="#9aa8b8"/><circle cx="18" cy="19" r="5.5" fill="#5ab060"/><circle cx="18" cy="19" r="4.5" fill="#e8f0e8"/><path d="M15.5 18l2 2 3-3" stroke="#3a8a40" stroke-width="1" fill="none"/></svg>
<!-- feather active -->
<div class="a" style="left:1406px;top:1037px;width:37px;height:38px;background:#f0f0f0;border-radius:5px;border:1px solid #e2e2e2"></div>
<svg class="a" style="left:1415px;top:1043px" width="20" height="26" viewBox="0 0 20 26"><path d="M3 25Q2 14 8 7Q13 1 18 0Q18 9 13 15Q9 20 3 25z" fill="#2a4a8c"/><path d="M4 24Q7 13 16 3" stroke="#0a1a3a" stroke-width="1" fill="none"/><path d="M8 10q3 1 6 0M7 14q3 1 5 0" stroke="#6a8ac8" stroke-width=".8" fill="none"/></svg>
<div class="a" style="left:1417px;top:1072px;width:16px;height:3px;border-radius:2px;background:#1a6ad0"></div>
<!-- indicators -->
<div class="a" style="left:849px;top:1073px;width:6px;height:3px;border-radius:2px;background:#7a7a7a"></div>
<div class="a" style="left:1025px;top:1073px;width:6px;height:3px;border-radius:2px;background:#7a7a7a"></div>
<div class="a" style="left:1069px;top:1073px;width:6px;height:3px;border-radius:2px;background:#7a7a7a"></div>
<div class="a" style="left:1113px;top:1073px;width:6px;height:3px;border-radius:2px;background:#7a7a7a"></div>
<div class="a" style="left:1157px;top:1073px;width:6px;height:3px;border-radius:2px;background:#7a7a7a"></div>
<div class="a" style="left:1201px;top:1073px;width:6px;height:3px;border-radius:2px;background:#7a7a7a"></div>
<div class="a" style="left:1245px;top:1073px;width:6px;height:3px;border-radius:2px;background:#7a7a7a"></div>
<div class="a" style="left:1289px;top:1073px;width:6px;height:3px;border-radius:2px;background:#7a7a7a"></div>
<div class="a" style="left:1333px;top:1073px;width:6px;height:3px;border-radius:2px;background:#7a7a7a"></div>
<div class="a" style="left:1377px;top:1073px;width:6px;height:3px;border-radius:2px;background:#7a7a7a"></div>
<!-- clock -->
<div class="t" id="x34" style="left:1872.23px;top:1041.50px;font-size:12px;color:#1a1a1a;transform:scaleX(0.9276);transform-origin:0 0">14:27</div>
<div class="t" id="x35" style="left:1845.90px;top:1058.00px;font-size:12px;color:#1a1a1a;transform:scaleX(1.0327);transform-origin:0 0">24/1/2569</div>


<div class="t" style="left:302px;top:990px;font-size:12px;color:#333">(5)</div>
<div class="t" style="left:590px;top:990px;font-size:12px;color:#333">(4)</div>
<!-- APP -->
<div id="app" class="a"></div>
<div id="title" class="a"></div>
<svg class="a" style="left:104px;top:75px" width="11" height="17" viewBox="0 0 11 17"><path d="M2 13Q1 8 4.5 4Q8 1 10 1Q10.5 6 7.5 9.5Q5 12.5 2.5 13z" fill="#8eaee0" stroke="#1a1a2a" stroke-width=".9"/><path d="M2.5 16.5L3 13Q5 8 9 3" stroke="#1a1a2a" stroke-width="1" fill="none"/></svg>
<div class="t" id="x36" style="left:121.54px;top:78.00px;font-size:12px;color:#1a1a1a;transform:scaleX(0.9851);transform-origin:0 0">SJ88 AutoBatch v26.5.3 (Multi-Profile)</div>
<div class="a" style="left:1372px;top:83px;width:11px;height:1px;background:#111"></div>
<div class="a" style="left:1418px;top:77px;width:11px;height:11px;border:1px solid #111"></div>
<svg class="a" style="left:1464px;top:77px" width="12" height="12" viewBox="0 0 12 12"><path d="M.5 .5l11 11M11.5 .5l-11 11" stroke="#111" stroke-width="1"/></svg>

<div class="t" id="x37" style="left:104.11px;top:111.00px;font-size:12.5px;color:#1a1a1a;transform:scaleX(0.9651);transform-origin:0 0">Profiles:</div>
<div class="btn" style="left:160px;top:106px;width:78px;height:22px"></div>
<div class="t" id="x38" style="left:163.51px;top:111.00px;font-size:12.5px;color:#1a1a1a;transform:scaleX(0.9957);transform-origin:0 0">+ Add Profile</div>
<div class="btn" style="left:250px;top:106px;width:86px;height:22px"></div>
<div class="t" id="x39" style="left:254.11px;top:111.00px;font-size:12.5px;color:#1a1a1a;transform:scaleX(0.9772);transform-origin:0 0">- Delete Profile</div>
<div class="btn" style="left:358px;top:106px;width:92px;height:22px;"></div>
<div class="t" id="x40" style="left:376.16px;top:111.00px;font-size:12.5px;color:#1a1a1a;transform:scaleX(0.9324);transform-origin:0 0">Setup Wizard</div>
<svg class="a" style="left:364px;top:112px" width="11" height="11" viewBox="0 0 11 11"><path d="M2 2l7 7" stroke="#666" stroke-width="2.2"/><circle cx="2.5" cy="2.5" r="2" fill="#888"/><circle cx="8.5" cy="8.5" r="2" fill="#888"/></svg>
<svg class="a" style="left:1265px;top:112px" width="10" height="10" viewBox="0 0 10 10"><rect x=".5" y="1.5" width="9" height="8" rx="1" fill="#e4f2e4" stroke="#3a9a3a"/><rect x=".5" y="1.5" width="9" height="2.5" fill="#3a9a3a"/><path d="M3 5.5v3M5 5.5v3M7 5.5v3M1.5 7h7" stroke="#3a9a3a" stroke-width=".6"/></svg>
<div class="t" id="x41" style="left:1278.77px;top:111.00px;font-size:12.5px;color:#3a8a3e;transform:scaleX(0.8986);transform-origin:0 0">License: nuaoeu: 2029-01-08 (1079 5u)</div>

<!-- outer notebook -->
<div class="a" style="left:99px;top:140px;width:55px;height:22px;background:#f9f9f9;border:1px solid #e6e6e6;border-bottom:none"></div>
<div class="t" id="x42" style="left:106.08px;top:144.75px;font-size:12.5px;color:#1a1a1a;transform:scaleX(0.9615);transform-origin:0 0">Default</div>
<div class="a" style="left:98px;top:161px;width:1389px;height:832px;border:1px solid #dcdcdc"></div>
<!-- left inner notebook -->
<div class="a" style="left:103px;top:188px;width:1014px;height:798px;border:1px solid #dadada"></div>
<div class="a" style="left:105px;top:169px;width:472px;height:20px;background:#eeeeee;border:1px solid #e2e2e2;border-bottom:none"></div>
<div class="a" style="left:139px;top:170px;width:1px;height:18px;background:#dcdcdc"></div>
<div class="a" style="left:215px;top:170px;width:1px;height:18px;background:#dcdcdc"></div>
<div class="a" style="left:259px;top:170px;width:1px;height:18px;background:#dcdcdc"></div>
<div class="a" style="left:338px;top:170px;width:1px;height:18px;background:#dcdcdc"></div>
<div class="a" style="left:396px;top:170px;width:1px;height:18px;background:#dcdcdc"></div>
<div class="a" style="left:462px;top:170px;width:1px;height:18px;background:#dcdcdc"></div>
<div class="a" style="left:525px;top:170px;width:1px;height:18px;background:#dcdcdc"></div>
<div class="a" style="left:577px;top:167px;width:72px;height:22px;background:#f9f9f9;border:1px solid #e3e3e3;border-bottom:none"></div>
<div class="t" id="x43" style="left:108.96px;top:174.00px;font-size:12.5px;color:#1a1a1a;transform:scaleX(0.9885);transform-origin:0 0">Main</div>
<div class="t" id="x44" style="left:143.68px;top:174.00px;font-size:12.5px;color:#1a1a1a;transform:scaleX(0.9431);transform-origin:0 0">File Manager</div>
<div class="t" id="x45" style="left:220.50px;top:174.00px;font-size:12.5px;color:#1a1a1a;transform:scaleX(1.0114);transform-origin:0 0">Admin</div>
<div class="t" id="x46" style="left:263.16px;top:174.00px;font-size:12.5px;color:#1a1a1a;transform:scaleX(0.9541);transform-origin:0 0">Health Check</div>
<div class="t" id="x47" style="left:343.00px;top:174.00px;font-size:12.5px;color:#1a1a1a;transform:scaleX(0.9596);transform-origin:0 0">Auto Gen</div>
<div class="t" id="x48" style="left:401.09px;top:174.00px;font-size:12.5px;color:#1a1a1a;transform:scaleX(0.9627);transform-origin:0 0">Changelog</div>
<div class="t" id="x49" style="left:466.65px;top:174.00px;font-size:12.5px;color:#1a1a1a;transform:scaleX(0.9456);transform-origin:0 0">Duplicates</div>
<div class="t" id="x50" style="left:529.65px;top:174.00px;font-size:12.5px;color:#1a1a1a;transform:scaleX(0.9446);transform-origin:0 0">Run Log</div>
<div class="t" id="x51" style="left:581.72px;top:171.50px;font-size:12.5px;color:#1a1a1a;transform:scaleX(0.9262);transform-origin:0 0">Live Stream</div>

<!-- status -->
<div class="a" style="left:112px;top:198px;width:12px;height:12px;background:#a3aec0"></div>
<svg class="a" style="left:136px;top:195px" width="20" height="18" viewBox="0 0 20 18"><rect x="1.2" y="1.2" width="16.6" height="15.6" rx="2" fill="none" stroke="#111" stroke-width="2.2"/><path d="M4.5 8.5l3.5 3.5 6-7" fill="none" stroke="#111" stroke-width="2.2"/></svg>
<div class="t" id="x52" style="left:160.00px;top:197.00px;font-size:16px;font-weight:bold;color:#111;transform:scaleX(1.0000);transform-origin:0 0">DONE: 0s | 0 outputs</div>
<div class="t" id="x53" style="left:1016.00px;top:199.00px;font-size:12.5px;color:#1a1a1a;transform:scaleX(0.9667);transform-origin:0 0">Time:</div>
<div class="t m" id="x54" style="left:1056.90px;top:199.00px;font-size:13.3px;color:#1a1a1a;transform:scaleX(1.0395);transform-origin:0 0">00:00</div>

<!-- Progress -->
<div class="lf" style="left:112px;top:231px;width:996px;height:99px"></div>
<div class="a" style="left:117px;top:228px;width:51px;height:6px;background:#f0f0f0"></div>
<div class="t" id="x55" style="left:119.28px;top:226.00px;font-size:12.5px;color:#1a1a1a;transform:scaleX(0.9082);transform-origin:0 0">Progress</div>
<div class="a" style="left:122px;top:253px;width:976px;height:22px;background:#e6e6e6;border:1px solid #bcbcbc"></div>
<div class="t m" id="x56" style="left:546.44px;top:284.00px;font-size:11.6px;color:#1a1a1a;transform:scaleX(1.0201);transform-origin:0 0">0 / 0 outputs (0%)</div>
<div class="t m" id="x57" style="left:138.90px;top:307.00px;font-size:11.6px;color:#1a1a1a;transform:scaleX(1.0269);transform-origin:0 0">ETA: --:--</div>
<div class="t m" id="x58" style="left:987.94px;top:307.00px;font-size:11.6px;color:#1a1a1a;transform:scaleX(1.0157);transform-origin:0 0">Speed: 0.0/hr</div>

<!-- Steps -->
<div class="lf" style="left:112px;top:351px;width:996px;height:163px"></div>
<div class="a" style="left:117px;top:348px;width:34px;height:6px;background:#f0f0f0"></div>
<div class="t" id="x59" style="left:119.32px;top:345.00px;font-size:12.5px;color:#1a1a1a;transform:scaleX(0.8903);transform-origin:0 0">Steps</div>
<div class="a dark" style="left:122px;top:368px;width:976px;height:120px"></div>
<div class="a" style="left:122px;top:368px;width:113px;height:25px;background:#f0f0f0"></div>
<div class="a" style="left:126px;top:370px;width:27px;height:21px;background:#12d0f5"></div>
<div class="t m" id="x60" style="left:158.97px;top:375.00px;font-size:11.6px;color:#111;transform:scaleX(1.0059);transform-origin:0 0">Initialize</div>
<svg class="a" style="left:126px;top:492px" width="7" height="9" viewBox="0 0 7 9"><path d="M7 0v9L0 4.5z" fill="#a8a8a8"/></svg>
<svg class="a" style="left:1087px;top:492px" width="7" height="9" viewBox="0 0 7 9"><path d="M0 0v9l7-4.5z" fill="#a8a8a8"/></svg>

<!-- Current Files -->
<div class="lf" style="left:112px;top:531px;width:996px;height:113px"></div>
<div class="a" style="left:117px;top:528px;width:72px;height:6px;background:#f0f0f0"></div>
<div class="t" id="x61" style="left:119.69px;top:525.00px;font-size:12.5px;color:#1a1a1a;transform:scaleX(0.9300);transform-origin:0 0">Current Files</div>
<div class="a dark" style="left:122px;top:548px;width:976px;height:88px"></div>

<!-- Activity Log -->
<div class="lf" style="left:112px;top:662px;width:996px;height:257px"></div>
<div class="a" style="left:117px;top:659px;width:68px;height:6px;background:#f0f0f0"></div>
<div class="t" id="x62" style="left:120.01px;top:656.00px;font-size:12.5px;color:#1a1a1a;transform:scaleX(0.9778);transform-origin:0 0">Activity Log</div>
<div class="a dark" style="left:122px;top:679px;width:959px;height:231px"></div>
<div class="m" style="position:absolute;left:124px;top:682px;font-size:11.65px;line-height:14px;color:#e6e6e6;white-space:pre">[14:27:40] Session started
[14:27:40] [WARN] No audio files found
[14:27:40] [OK] Session ended: SKIPPED_NO_AUDIO</div>
<svg class="a" style="left:1086px;top:684px" width="9" height="7" viewBox="0 0 9 7"><path d="M0 7h9L4.5 0z" fill="#a8a8a8"/></svg>
<svg class="a" style="left:1086px;top:899px" width="9" height="7" viewBox="0 0 9 7"><path d="M0 0h9L4.5 7z" fill="#a8a8a8"/></svg>

<!-- bottom buttons -->
<div class="btn" style="left:119px;top:930px;width:71px;height:21px;border-color:#ececec;background:#f8f8f8;color:#555"></div>
<div class="t" id="x63" style="left:137.30px;top:935.00px;font-size:12.5px;color:#555;transform:scaleX(0.9088);transform-origin:0 0">Pause</div>
<div class="btn" style="left:203px;top:930px;width:87px;height:21px;border-color:#ececec;background:#f8f8f8;color:#555;"></div>
<div class="t" id="x64" style="left:223.05px;top:935.00px;font-size:12.5px;color:#555;transform:scaleX(0.9844);transform-origin:0 0">Skip Output</div>
<svg class="a" style="left:207px;top:934px" width="13" height="13" viewBox="0 0 13 13"><rect x=".6" y=".6" width="11.8" height="11.8" rx="1.5" fill="none" stroke="#555" stroke-width="1.1"/><path d="M3 3.5v6l3-3zM6 3.5v6l3-3z" fill="#555"/><path d="M9.5 3.5v6" stroke="#555" stroke-width="1"/></svg>
<div class="btn" style="left:1031px;top:930px;width:71px;height:21px;border-color:#ececec;background:#f8f8f8;color:#555;"></div>
<div class="t" id="x65" style="left:1057.22px;top:935.00px;font-size:12.5px;color:#555;transform:scaleX(0.9351);transform-origin:0 0">Cancel</div>
<svg class="a" style="left:1040px;top:934px" width="13" height="13" viewBox="0 0 13 13"><rect x=".6" y=".6" width="11.8" height="11.8" rx="1.5" fill="none" stroke="#555" stroke-width="1.1"/><rect x="3" y="3" width="7" height="7" fill="#666"/></svg>
<div class="t" id="x66" style="left:122.49px;top:965.00px;font-size:12px;color:#3ed598;transform:scaleX(0.9690);transform-origin:0 0">OK: 0</div>
<div class="t" id="x67" style="left:169.91px;top:965.00px;font-size:12px;color:#e06a6a;transform:scaleX(0.8514);transform-origin:0 0">ERR: 0</div>
<div class="t" id="x68" style="left:222.00px;top:965.00px;font-size:12px;color:#e8b440;transform:scaleX(0.9592);transform-origin:0 0">WARN: 0</div>

<!-- Log (Default) -->
<div class="lf" style="left:1124px;top:175px;width:357px;height:811px"></div>
<div class="a" style="left:1129px;top:171px;width:75px;height:6px;background:#f0f0f0"></div>
<div class="t" id="x69" style="left:1131.62px;top:168.50px;font-size:12.5px;color:#1a1a1a;transform:scaleX(0.9620);transform-origin:0 0">Log (Default)</div>
<div class="a" style="left:1130px;top:187px;width:329px;height:793px;background:#fff;border-left:1px solid #777;border-top:1px solid #777;overflow:hidden">
<div class="log" style="position:absolute;left:1.5px;top:-8px">[SKIP] No audio files
[PROCESS] Starting: 10017 lanw Sy 307
[VOICE] Found 0 files in vdo_long_sound/
[SKIP] No audio files
[PROCESS] Starting: 10018 TKL E27 waww
[VOICE] Found 0 files in vdo_long_sound/
[SKIP] No audio files
[PROCESS] Starting: 10019 naoalnw
[VOICE] Found 0 files in vdo_long_sound/
[SKIP] No audio files
[PROCESS] Starting: 10020 ńolâ
[VOICE] Found 0 files in vdo_long_sound/
[SKIP] No audio files
[PROCESS] Starting: 10021 Mr99
[VOICE] Found 0 files in vdo_long_sound/
[SKIP] No audio files
[PROCESS] Starting: 10022 lunn
[VOICE] Found 0 files in vdo_long_sound/
[SKIP] No audio files
[PROCESS] Starting: 10023 500led
[VOICE] Found 0 files in vdo_long_sound/
[SKIP] No audio files
[PROCESS] Starting: 10024 lwuı
[VOICE] Found 0 files in vdo_long_sound/
[SKIP] No audio files
[PROCESS] Starting: 10025 nisit
[VOICE] Found 0 files in vdo_long_sound/
[SKIP] No audio files
[PROCESS] Starting: 10026 ennîwuoon
[VOICE] Found 0 files in vdo_long_sound/
[SKIP] No audio files
[PROCESS] Starting: 10027 ńoaulw
[VOICE] Found 0 files in vdo_long_sound/
[SKIP] No audio files
[PROCESS] Starting: 10028 Migu an150000w
[VOICE] Found 0 files in vdo_long_sound/
[SKIP] No audio files
[PROCESS] Starting: 20001 lw e27
[VOICE] Found 0 files in vdo_long_sound/
[SKIP] No audio files
[PROCESS] Starting: 20002 e27 jd
[VOICE] Found 0 files in vdo_long_sound/
[SKIP] No audio files
[PROCESS] Starting: 20003 e27 pupble
[VOICE] Found 0 files in vdo_long_sound/
[SKIP] No audio files
[PROCESS] Starting: 30001 coffe
[VOICE] Found 0 files in vdo_long_sound/
[SKIP] No audio files</div>
</div>
<div class="a" style="left:1466px;top:637px;width:2px;height:328px;background:#8a8a8a"></div>
<svg class="a" style="left:1202px;top:518px" width="8" height="18" viewBox="0 0 8 18"><path d="M1 1h2.5l.5.5.5-.5H7M4 1.5v15M1 17h2.5l.5-.5.5.5H7" stroke="#000" stroke-width="1" fill="none"/></svg>
</body></html>
